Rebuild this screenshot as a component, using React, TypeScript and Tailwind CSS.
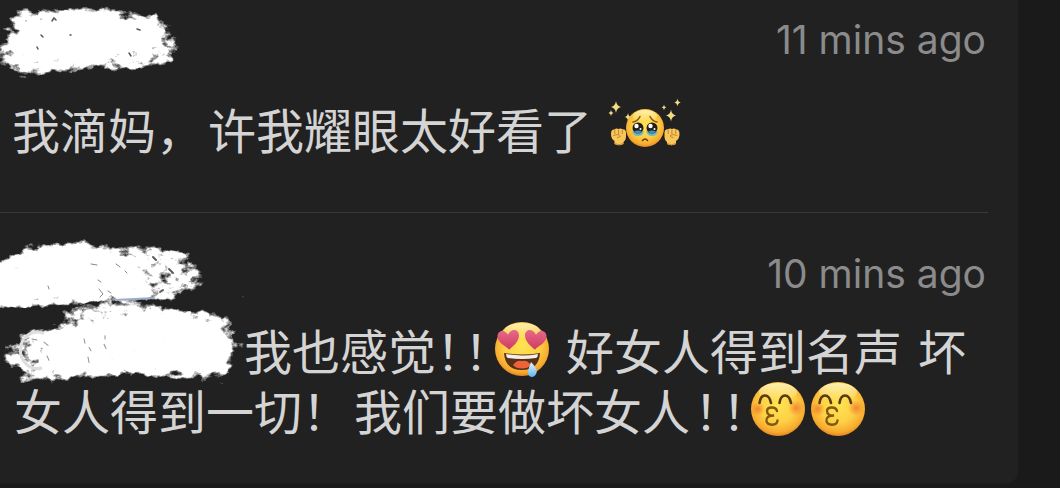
import type { ReactNode } from "react";

function Defs() {
  return (
    <svg className="absolute h-0 w-0" aria-hidden="true">
      <defs>
        <filter id="brush" x="-5%" y="-10%" width="110%" height="120%" colorInterpolationFilters="sRGB">
          <feTurbulence type="fractalNoise" baseFrequency="0.03 0.35" numOctaves="2" seed="4" result="streak" />
          <feDisplacementMap in="SourceGraphic" in2="streak" scale="16" xChannelSelector="R" yChannelSelector="A" result="rough" />
          <feGaussianBlur in="rough" stdDeviation="4 2" result="soft" />
          <feTurbulence type="fractalNoise" baseFrequency="0.1 0.14" numOctaves="4" seed="9" result="grain" />
          <feColorMatrix in="grain" type="matrix" values="0 0 0 0 1  0 0 0 0 1  0 0 0 0 1  1 0 0 0 0" result="mask" />
          <feComposite in="soft" in2="mask" operator="arithmetic" k1="0" k2="3.2" k3="3.4" k4="-2.9" result="cut" />
          <feGaussianBlur in="cut" stdDeviation="0.5" />
        </filter>
        <radialGradient id="face" cx="0.5" cy="0.42" r="0.6">
          <stop offset="0" stopColor="#ffe452" />
          <stop offset="0.55" stopColor="#fdd045" />
          <stop offset="0.85" stopColor="#f7ab2f" />
          <stop offset="1" stopColor="#dd7d1c" />
        </radialGradient>
        <linearGradient id="shine" x1="0" y1="0" x2="0" y2="1">
          <stop offset="0" stopColor="#fff6c0" stopOpacity="0.9" />
          <stop offset="1" stopColor="#fff6c0" stopOpacity="0" />
        </linearGradient>
        <radialGradient id="blush">
          <stop offset="0" stopColor="#f0702c" stopOpacity="0.75" />
          <stop offset="1" stopColor="#f0702c" stopOpacity="0" />
        </radialGradient>
        <linearGradient id="heart" x1="0" y1="0" x2="0" y2="1">
          <stop offset="0" stopColor="#e8698a" />
          <stop offset="1" stopColor="#cd3c62" />
        </linearGradient>
        <linearGradient id="drop" x1="0" y1="0" x2="0" y2="1">
          <stop offset="0" stopColor="#e4f6ff" />
          <stop offset="1" stopColor="#62b4ea" />
        </linearGradient>
      </defs>
    </svg>
  );
}

function NameMarkOne() {
  return (
    <svg className="block h-[78px] w-[184px]" viewBox="0 0 184 78" role="img" aria-label="Hidden name">
      <g filter="url(#brush)" fill="#fff">
        <path opacity="0.7" d="M17 10 L60 8 L112 8 L164 17 L169 33 L180 42 L174 60 L162 68 L90 69 L30 77 L8 76 L16 67 L-4 64 L-2 54 L6 30 Z" />
        <path d="M22 22 L52 14 L110 13 L154 24 L164 42 L148 54 L95 63 L30 69 L12 52 Z" />
      </g>
      <path d="M30 28 L56 20 L105 18 L145 29 L150 40 L125 49 L90 55 L34 60 L26 46 Z" fill="#fff" opacity="0.9" />
      <path d="M52 21 l2 -3 l2 2 M41 35 l2 2 M37 47 l1 2 M70 35 h1 M137 29 l3 1 M129 53 l2 3" fill="none" stroke="#555" strokeWidth="1.500" strokeLinecap="round" />
    </svg>
  );
}

function NameMarkTwo() {
  return (
    <svg className="block h-[76px] w-[208px]" viewBox="0 0 208 76" role="img" aria-label="Hidden name">
      <g filter="url(#brush)" fill="#fff">
        <path opacity="0.72" d="M27 5 L75 4 L110 9 L150 11 L186 13 L194 28 L203 32 L198 53 L165 65 L105 66 L0 73 L-12 72 L-10 24 L18 21 Z" />
        <path d="M26 16 L60 9 L90 13 L140 17 L138 30 L150 60 L100 62 L0 69 L-12 66 L-10 30 Z" />
      </g>
      <path d="M115 62 L154 60 L155 62 L115 64 Z" fill="#9aacc9" />
      <path d="M28 20 L62 13 L90 17 L132 20 L130 32 L142 54 L112 57 L86 58 L0 63 L0 34 Z" fill="#fff" opacity="0.85" />
      <path d="M99 52 l4 5 l-3 3 M108 54 l3 2 M91 27 l6 1 M116 27 l4 3 M98 43 l3 2 M48 49 l1 3 M125 34 l2 2" fill="none" stroke="#555" strokeWidth="1" strokeLinecap="round" opacity="0.7" />
      <path d="M169 32 l4 4 M153 20 l3 3 M160 55 l3 -2" fill="none" stroke="#333" strokeWidth="2" strokeLinecap="round" opacity="0.8" />
    </svg>
  );
}

function MentionMark() {
  return (
    <svg className="-mt-6 -mb-1.5 -ml-[14px] block h-[90px] w-[244px] shrink-0" viewBox="0 0 244 84" preserveAspectRatio="none" role="img" aria-label="Hidden mention">
      <g filter="url(#brush)" fill="#fff">
        <path opacity="0.72" d="M66 15 L100 6 L130 8 L180 12 L229 18 L232 36 L240 48 L231 62 L226 80 L190 77 L120 75 L40 81 L14 79 L26 71 L2 62 L2 52 L20 44 L24 34 L62 27 Z" />
        <path d="M44 37 L104 22 L116 12 L160 18 L222 26 L230 48 L220 70 L110 71 L36 73 Z" />
      </g>
      <path d="M50 42 L110 26 L150 21 L212 32 L222 48 L214 64 L110 66 L46 68 Z" fill="#fff" opacity="0.85" />
      <path d="M44 36 A17 17 0 1 0 42 68" fill="none" stroke="#dedede" strokeWidth="3" />
      <g fill="none" stroke="#555" strokeWidth="1" strokeLinecap="round" opacity="0.65">
        <path d="M25 42 l4 -2 M32 41 l5 1 M25 60 l3 2 M44 44 l4 3 M47 57 l2 4 M84 41 l1 4 M89 49 l2 3 M88 58 l1 5 M105 38 v3 M104 46 l2 4" />
      </g>
    </svg>
  );
}

const star = "M0 -6 Q0.6 -0.8 5 0 Q0.6 0.8 0 6 Q-0.6 0.8 -5 0 Q-0.6 -0.8 0 -6Z";

function Fist() {
  return (
    <g>
      <path d="M0 5 Q0 0 3.5 0.5 Q5 -1 7.5 0 Q9.5 -1.2 11.5 0.3 Q15 0 15 4 V8 Q15 11 12.5 13 V15 Q8 17.5 3.5 15 V12 Q0 10 0 5Z" fill="#f9c65a" />
      <path d="M3.8 1.5 V4.5 M7.6 1 V4.5 M11.3 1.3 V4.5 M2.500 6.5 Q8 4.5 9.5 7 Q9 8.500 6.5 8.500" fill="none" stroke="#bd7c29" strokeWidth="0.9" strokeLinecap="round" />
      <path d="M3.5 14.5 Q8 17 12.5 14.5" fill="none" stroke="#d18a27" strokeWidth="1" />
    </g>
  );
}

function PleadingEmoji() {
  return (
    <svg className="-mt-2 block h-[52px] w-[74px] shrink-0" viewBox="0 0 74 52" role="img" aria-label="Pleading face with fists and sparkles">
      <g fill="#f3dd83">
        <path d={star} transform="translate(8 9)" />
        <path d={star} transform="translate(3 15) scale(.5)" />
        <path d={star} transform="translate(20 19) scale(.65)" />
        <path d={star} transform="translate(56 9.500) scale(.45)" />
        <path d={star} transform="translate(69.500 4.500) scale(.65)" />
        <path d={star} transform="translate(63 17.500)" />
      </g>
      <g transform="translate(3 31)"><Fist /></g>
      <g transform="translate(71.500 31) scale(-1 1)"><Fist /></g>
      <circle cx="37" cy="30" r="19" fill="url(#face)" />
      <ellipse cx="37" cy="18" rx="12" ry="6" fill="url(#shine)" />
      <g transform="translate(-1 0)">
        <path d="M26 24 Q31 23 33 18.500 M50 24 Q45 23 43 18.500" fill="none" stroke="#8b5717" strokeWidth="1.500" strokeLinecap="round" />
        <path d="M25 33 Q31 36 37 33 Q36 38 31 38 Q26 38 25 33Z M39 33 Q45 36 51 33 Q50 38 45 38 Q40 38 39 33Z" fill="#6cb9c4" />
        <circle cx="31" cy="30" r="5.500" fill="#241d1b" />
        <circle cx="45" cy="30" r="5.500" fill="#241d1b" />
        <path d="M27 33.500 Q31 31.500 35 33.500 Q33 35.500 31 35.500 Q29 35.500 27 33.500Z M41 33.500 Q45 31.500 49 33.500 Q47 35.500 45 35.500 Q43 35.500 41 33.500Z" fill="#3f91b5" />
        <circle cx="29.500" cy="28" r="2.200" fill="#fff" />
        <circle cx="43.500" cy="28" r="2.200" fill="#fff" />
        <circle cx="33.500" cy="31" r="1" fill="#fff" />
        <circle cx="47.500" cy="31" r="1" fill="#fff" />
        <path d="M35.500 42.500 Q38 39.500 40.500 42.500" fill="none" stroke="#663711" strokeWidth="1.600" strokeLinecap="round" />
      </g>
    </svg>
  );
}

const heartPath = "M0 3.5 C-3 -2.5 -10.5 -0.5 -9.5 6 C-8.5 11 -2 14 1 17 C4 14 10 10 10 4 C10 -2 2.5 -3 0 3.5Z";

function HeartEyesEmoji() {
  return (
    <svg className="block h-[56px] w-[56px] shrink-0" viewBox="0 0 56 56" role="img" aria-label="Heart eyes, drooling">
      <circle cx="28" cy="28" r="27" fill="url(#face)" />
      <ellipse cx="28" cy="10" rx="18" ry="8" fill="url(#shine)" />
      <path d={heartPath} transform="translate(14 10) scale(1.1)" fill="url(#heart)" />
      <path d={heartPath} transform="translate(42 10) scale(-1.1 1.1)" fill="url(#heart)" />
      <path d="M10 32 Q28 35 46 32 Q45 49 28 49 Q11 49 10 32Z" fill="#55301a" />
      <path d="M12 33 Q28 36 44 33 Q44 36 42 37 Q28 39 14 37 Q12 36 12 33Z" fill="#f4f0e8" />
      <path d="M19 44 Q23 38.500 28 40 Q33 38.500 37 44 Q34 47.500 28 47.500 Q22 47.500 19 44Z" fill="#ed6337" />
      <path d="M37 41 Q44 48 42.500 52 Q41 56 37.500 56 Q33 55 34 50 Q35 46 37 41Z" fill="url(#drop)" />
    </svg>
  );
}

function KissEmoji() {
  return (
    <svg className="block h-[56px] w-[56px] shrink-0" viewBox="0 0 56 56" role="img" aria-label="Kissing face with smiling eyes">
      <circle cx="28" cy="28" r="27" fill="url(#face)" />
      <ellipse cx="28" cy="11" rx="19" ry="9" fill="url(#shine)" />
      <circle cx="8" cy="28" r="7" fill="url(#blush)" />
      <circle cx="46" cy="27" r="8" fill="url(#blush)" />
      <path d="M9.500 22 C11 12 19 12 21 22 M29.500 22 C31 12 39 12 41 22" fill="none" stroke="#5a3b0a" strokeWidth="2.600" strokeLinecap="round" />
      <path d="M27 30 C26 25 17 25.500 17 30 C17 33.500 20 35 24 34.500 C18 34.500 16 37 16.500 40 C17.500 45 27 45 27.500 39.500" fill="none" stroke="#80590f" strokeWidth="2.400" strokeLinecap="round" />
    </svg>
  );
}

function Bang() {
  return <span className="inline-block w-7 [font-feature-settings:'halt']">！</span>;
}

function Time({ children }: { children: ReactNode }) {
  return <time className="block font-['Inter',sans-serif] text-[39px] leading-[48px] text-[#8b8b8b]">{children}</time>;
}

export default function App() {
  return (
    <main className="min-h-screen overflow-hidden bg-[#1a1a1a] pr-[42px] font-['Noto_Sans_CJK_SC',sans-serif] text-[48px] leading-[60px] text-[#d4d4d4]">
      <Defs />
      <section className="rounded-br-xl border-b border-[#1e1e1e] bg-[#212121] pr-8 pb-11">
        <article className="-mr-0.5 border-b border-[#393939] pr-0.5 pb-[54px]">
          <header className="flex items-start justify-between">
            <NameMarkOne />
            <div className="pt-4">
              <Time>11 mins ago</Time>
            </div>
          </header>
          <p className="mt-5 flex items-center whitespace-nowrap pl-3">
            <span>我滴妈，</span>
            <span className="mx-1">许我耀眼太好看了</span>
            <span className="pl-3">
              <PleadingEmoji />
            </span>
          </p>
        </article>
        <article className="pt-6">
          <header className="flex items-start justify-between">
            <NameMarkTwo />
            <div className="pt-[13px]">
              <Time>10 mins ago</Time>
            </div>
          </header>
          <div className="mt-1.5 whitespace-nowrap pl-[14px]">
            <p className="flex items-center">
              <MentionMark />
              <span>我也感觉</span>
              <Bang />
              <Bang />
              <span className="pl-0.5">
                <HeartEyesEmoji />
              </span>
              <span className="mx-4">好女人得到名声</span>
              <span>坏</span>
            </p>
            <p className="flex items-center">
              <span>女人得到一切！</span>
              <span className="mx-1">我们要做坏女人</span>
              <Bang />
              <Bang />
              <KissEmoji />
              <span className="ml-1">
                <KissEmoji />
              </span>
            </p>
          </div>
        </article>
      </section>
    </main>
  );
}
